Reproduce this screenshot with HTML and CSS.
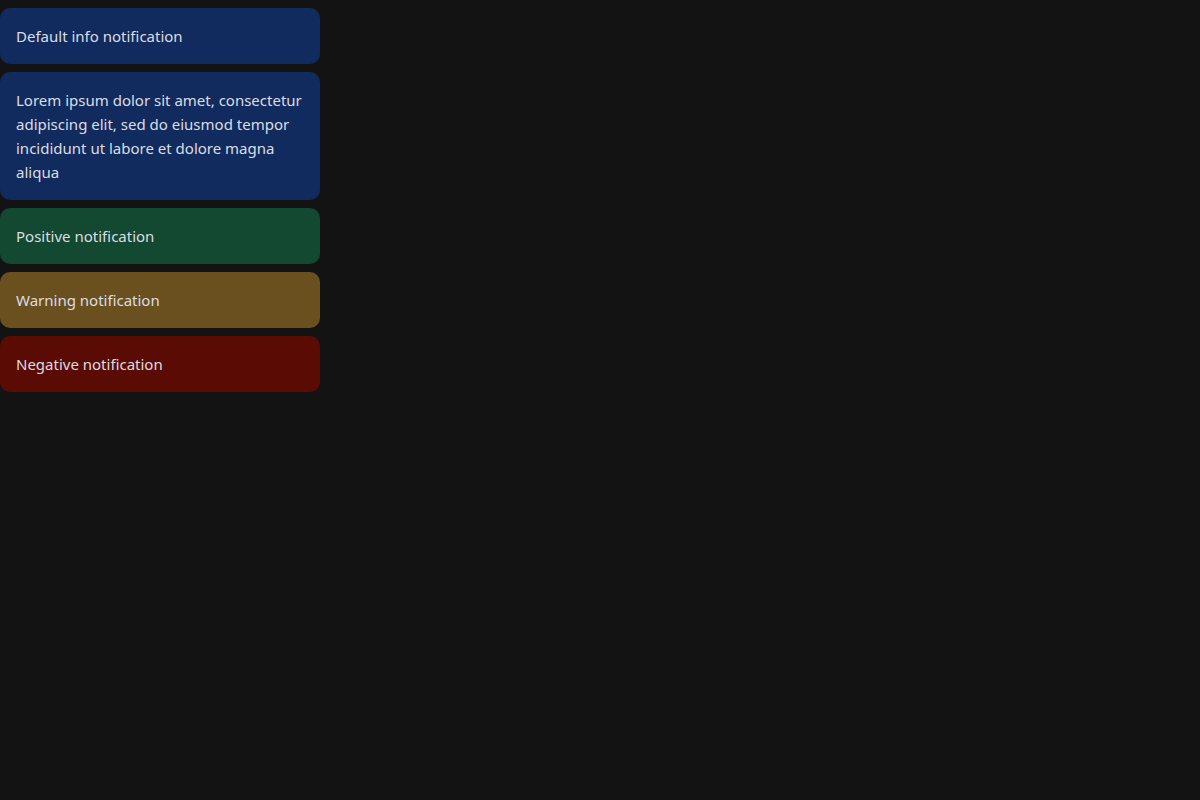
FILE: index.html
```html
<!DOCTYPE html>
<html>
<head>
<meta charset="utf-8">
<link rel="stylesheet" href="styles.css">
</head>
<body>
<div class="stack">
  <div class="note info">Default info notification</div>
  <div class="note info">Lorem ipsum dolor sit amet, consectetur adipiscing elit, sed do eiusmod tempor incididunt ut labore et dolore magna aliqua</div>
  <div class="note positive">Positive notification</div>
  <div class="note warning">Warning notification</div>
  <div class="note negative">Negative notification</div>
</div>
</body>
</html>
```
FILE: styles.css
```css
html, body {
  margin: 0;
  background: #131313;
}
body {
  padding-top: 8px;
  font-family: "Noto Sans", sans-serif;
  font-size: 15px;
  line-height: 24px;
  color: #dcdde2;
}
.stack {
  width: 320px;
  display: flex;
  flex-direction: column;
  gap: 8px;
}
.note {
  padding: 16px;
  border-radius: 10px;
}
.info { background: #112b5f; }
.positive { background: #124930; }
.warning { background: #6a501f; }
.negative { background: #5a0b04; }
```
